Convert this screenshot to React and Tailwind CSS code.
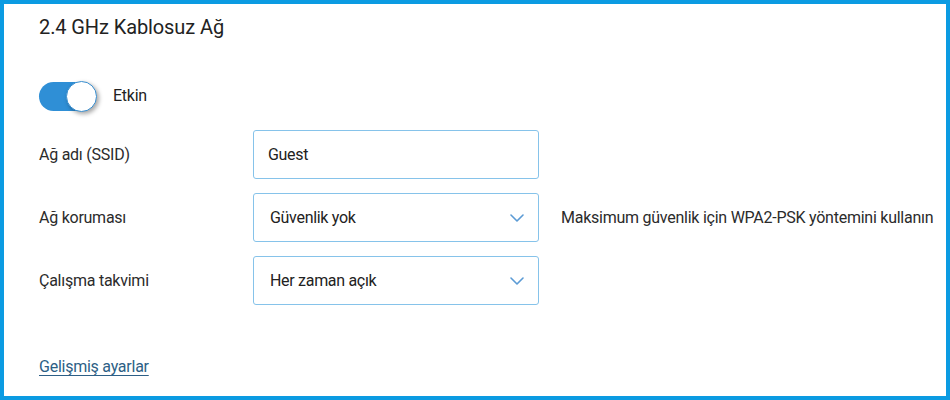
import React from "react";

function Chevron() {
  return (
    <svg width="14" height="8" viewBox="0 0 14 8" fill="none" className="shrink-0">
      <path d="M1 1L7 7L13 1" stroke="#5b9bd5" strokeWidth="1.6" strokeLinecap="round" strokeLinejoin="round" />
    </svg>
  );
}

function Row({ label, children, extra }) {
  return (
    <div className="flex items-center h-[49px]">
      <div className="w-[214px] text-[16px] tracking-[-0.25px] text-[#2b2b2b]">{label}</div>
      {children}
      {extra && <div className="ml-[22px] text-[16px] tracking-[-0.25px] text-[#2b2b2b] whitespace-nowrap">{extra}</div>}
    </div>
  );
}

function Field({ value, select }) {
  return (
    <div className="w-[286px] h-[49px] border border-[#86c3ea] rounded-[3px] flex items-center justify-between pl-[14px] pr-[14px] text-[16px] tracking-[-0.3px] text-[#222]">
      <span className={select ? "pl-[2px]" : ""}>{value}</span>
      {select && <Chevron />}
    </div>
  );
}

export default function App() {
  return (
    <div
      className="w-[950px] h-[400px] border-4 border-[#0b9be2] bg-white pl-[35px] pt-[9px] flex flex-col"
      style={{ fontFamily: "Roboto, 'Liberation Sans', sans-serif" }}
    >
      <div className="text-[20px] leading-7 tracking-[-0.1px] text-[#222]">2.4 GHz Kablosuz Ağ</div>
      <div className="mt-[40px] flex items-center h-[30px]">
        <div className="relative w-[57px] h-[29px] rounded-full bg-[#2f8fd6]">
          <div className="absolute right-[-1px] top-[-1px] w-[31px] h-[31px] rounded-full bg-white border border-[#3a8fd0] shadow-[2px_2px_4px_rgba(0,0,0,0.35)]" />
        </div>
        <span className="ml-[17px] text-[16px] tracking-[-0.25px] text-[#222]">Etkin</span>
      </div>
      <div className="mt-[19px] flex flex-col gap-[14px]">
        <Row label="Ağ adı (SSID)">
          <Field value="Guest" />
        </Row>
        <Row label="Ağ koruması" extra="Maksimum güvenlik için WPA2-PSK yöntemini kullanın">
          <Field value="Güvenlik yok" select />
        </Row>
        <Row label="Çalışma takvimi">
          <Field value="Her zaman açık" select />
        </Row>
      </div>
      <div className="mt-[50px]">
        <a className="text-[16px] leading-6 tracking-[-0.25px] text-[#2d5f86] underline underline-offset-[3px] decoration-[#2d5f86]">
          Gelişmiş ayarlar
        </a>
      </div>
    </div>
  );
}
